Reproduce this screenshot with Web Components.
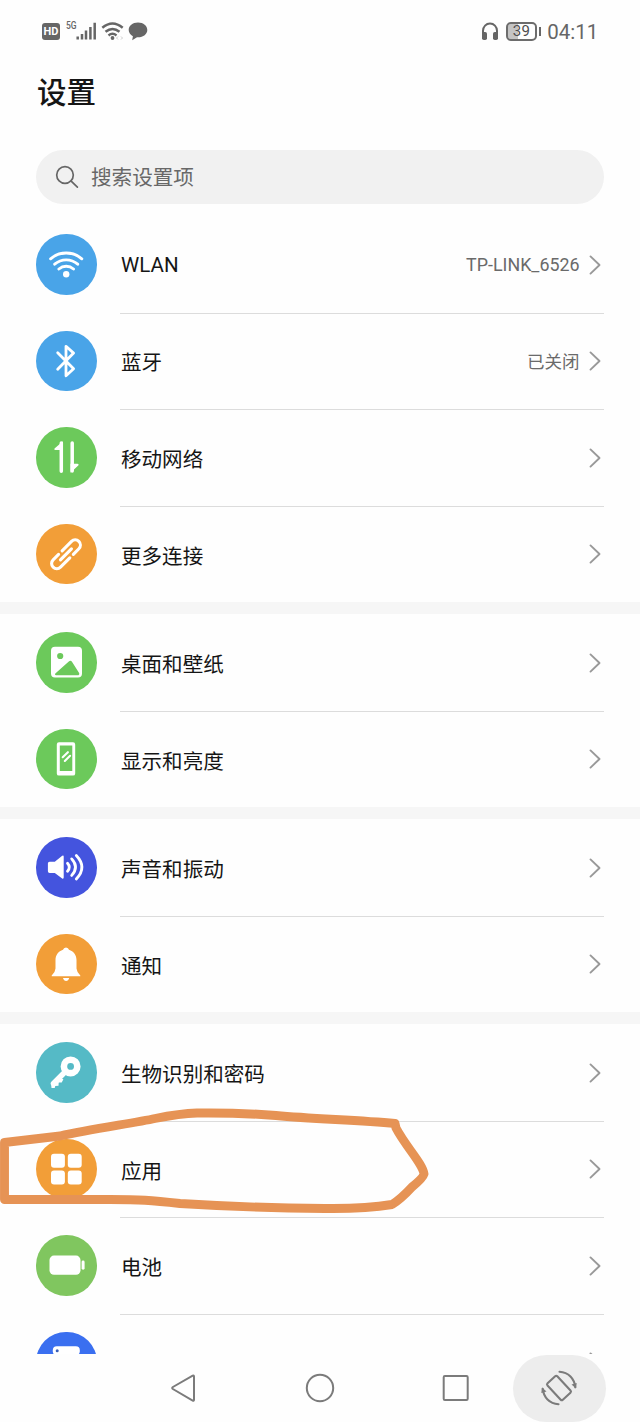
<!DOCTYPE html>
<html lang="zh-CN">
<head>
<meta charset="utf-8">
<title>设置</title>
<style>
html,body{margin:0;padding:0}
body{width:640px;height:1422px;overflow:hidden;background:#fefefe;color:#151515;font-family:Roboto,"Noto Sans CJK SC",sans-serif}
</style>
</head>
<body>
<settings-screen></settings-screen>
<script>
const define = (name, html, setup) => {
  const template = document.createElement('template');
  template.innerHTML = html;
  customElements.define(name, class extends HTMLElement {
    connectedCallback() {
      if (this.shadowRoot) return;
      this.attachShadow({ mode: 'open' }).append(template.content.cloneNode(true));
      if (setup) setup(this, this.shadowRoot);
    }
  });
};

// Glyphs for the round badges, on a 60 x 60 canvas centred on the badge.
const glyphs = {
  wifi: `<g fill="none" stroke="#fff" stroke-width="2.9" stroke-linecap="round"><path d="M14.6 24.8a24 24 0 0 1 31.2 0M18.7 30.2a17.5 17.5 0 0 1 23 0M22.9 35a11.2 11.2 0 0 1 14.6 0"/></g><circle cx="30.2" cy="40.3" r="3.2" fill="#fff"/>`,
  bluetooth: `<path d="M21.7 21.8 37.6 37.7 30 44.8V15.3l7.6 6.8L21.7 38.3" fill="none" stroke="#fff" stroke-width="2.8" stroke-linecap="round" stroke-linejoin="round"/>`,
  data: `<path d="M25.3 16V44.3M36.2 16v28" fill="none" stroke="#fff" stroke-width="3.5" stroke-linecap="round"/><path d="M27 14.3 18.5 21.4q-.8 1.5 1 1.5H27ZM34.5 45.8l8-7.6q.6-1.3-1-1.5H34.5Z" fill="#fff"/>`,
  link: `<g transform="rotate(45 30 30)" fill="none" stroke="#fff" stroke-width="3.100" stroke-linecap="round"><path d="M30.200 22.500V38M25 30.500V17.200a5.200 5.200 0 0 1 10.400 0V25M35.400 30V43.200a5.200 5.200 0 0 1-10.400 0V35.500"/></g>`,
  picture: `<path fill="#fff" fill-rule="evenodd" d="M19 14.8H42a4 4 0 0 1 4 4V41.5a4 4 0 0 1-4 4H19a4 4 0 0 1-4-4V18.8a4 4 0 0 1 4-4ZM20 43.2H42.5q1.7-1 .3-2.7L35.8 29.4q-1.4-1.5-3 0L19.3 41.5q-1 1.6.7 1.7ZM24.2 20.9a3.1 3.1 0 1 0 0 6.2a3.1 3.1 0 0 0 0-6.2Z"/>`,
  phone: `<path fill="#fff" fill-rule="evenodd" d="M23 13.2H37a2.2 2.2 0 0 1 2.2 2.2V44.4a2.2 2.2 0 0 1-2.2 2.2H23a2.2 2.2 0 0 1-2.2-2.2V15.4A2.2 2.2 0 0 1 23 13.2ZM23.8 16.6V42H36.3V16.6Z"/><path d="m26.7 28.2 5.2-5M28.8 32l5.3-5.2" stroke="#fff" stroke-width="2.1" stroke-linecap="round"/>`,
  sound: `<path d="M13.6 24.7h5.2l7.4-6q1.5-.8 1.5.9v21q0 1.7-1.5.9l-7.4-5.6h-5.2q-1.7 0-1.7-1.6V26.3q0-1.6 1.7-1.6Z" fill="#fff"/><g fill="none" stroke="#fff" stroke-linecap="round" stroke-width="2.8"><path d="M31.5 26.2q3.6 4 0 8M35.7 21.9q7.6 8.2 0 16.5M40.3 18.5q11.2 11.8 0 23.5"/></g>`,
  bell: `<path d="M30 13.5q2.4.2 3 2.2c4.5 1.5 7.5 5.3 7.5 10.3v8.5q.2 3.4 3.8 7v.7H15.700v-.7q3.700-3.600 3.800-7V26c0-5 3-8.800 7.500-10.300q.6-2 3-2.200Z" fill="#fff"/><path d="M27 44.100h6.200q-.8 3-3.100 3t-3.100-3Z" fill="#fff"/>`,
  key: `<circle cx="34.600" cy="24.400" r="6.700" fill="none" stroke="#fff" stroke-width="6.600"/><path d="m29.500 29.500-12 12" stroke="#fff" stroke-width="5.500" stroke-linecap="round"/><path d="m23.800 36 3.600 1.300-1.700 3.200-3-.1-.2 3.300-3.200.2-.6 2h-3.200l-.5-5Z" fill="#fff"/>`,
  apps: `<g fill="#fff"><rect x="15" y="14.700" width="13.900" height="14" rx="3"/><rect x="31.800" y="14.700" width="13.900" height="14" rx="3"/><rect x="15" y="31.400" width="13.900" height="14" rx="3"/><rect x="31.800" y="31.400" width="13.900" height="14" rx="3"/></g>`,
  battery: `<rect x="13.500" y="20.600" width="31" height="19.200" rx="4.500" fill="#fff"/><rect x="45.600" y="25.500" width="3" height="9.200" rx="1.400" fill="#fff"/>`,
  storage: `<rect x="16.800" y="14.200" width="27" height="9" rx="4" fill="#fff"/><circle cx="21.200" cy="18.700" r="1.500" fill="#3a5fb8"/>`
};

define('status-bar', `<style>
:host{display:flex;box-sizing:border-box;height:62px;padding:0 42.500px 0 42px;align-items:center;justify-content:space-between;color:#666}
div{display:flex;align-items:center}svg{display:block}
.signals{height:24px}
.net{align-self:flex-start;width:9px;font:500 10px/12px Roboto,sans-serif;margin:1px 0 0 6px;transform:scaleX(.85);transform-origin:left}
.hd{width:18px;height:17px;border-radius:3px;background:#666;color:#fff;font:700 11px/17px Roboto,sans-serif;text-align:center}
.batt{box-sizing:border-box;width:31px;height:19px;border:2px solid #6c6c6c;border-radius:5px;font-size:15px;line-height:15px;justify-content:center;background:linear-gradient(90deg,#c4c4c4 38%,transparent 38%) padding-box;color:#4e4e4e;letter-spacing:.4px;margin-left:7.500px}
.tip{width:2px;height:9px;background:#666;margin:0 6px 0 2px}
.power{margin-right:-.700px}
time{font-size:20.500px;line-height:24px;padding-top:1px}
</style>
<div class="signals"><span class="hd">HD</span><span class="net">5G</span>
<svg width="73" height="24" viewBox="75 19 73 24"><path d="M77.700 39.500v-3M82 39.500v-5.500M86 39.500v-9M90.400 39.500V27M94.700 39.500V22.800" stroke="#666" stroke-width="2.500"/><g fill="none" stroke="#666" stroke-width="2.500"><path d="M102.300 27.700q10.200-8.400 20.400 0M105.500 31.800q7-5.700 14 0M108.500 35.400q4-3.200 8 0"/></g><circle cx="112.500" cy="38" r="1.900" fill="#666"/><path d="m118 36.500-1.500 1.500 1.500 1.500m3-3 1.500 1.500-1.500 1.500" fill="none" stroke="#ccc"/><path d="M138 22.500c5.500 0 9.300 3.400 9.300 7.400s-3.800 7.400-9.300 7.400h-1l-4.800 2.900.7-4c-2.600-1.500-4.200-3.700-4.200-6.300 0-4 3.800-7.400 9.300-7.400Z" fill="#666"/></svg></div>
<div class="power"><svg width="18" height="20" viewBox="0 0 18 20"><path d="M2 13.500V9.800a7 7.300 0 0 1 14 0v3.700" fill="none" stroke="#666" stroke-width="2"/><rect x="1" y="11" width="5" height="8" rx="1.800" fill="#666"/><rect x="12" y="11" width="5" height="8" rx="1.800" fill="#666"/></svg><div class="batt">39</div><span class="tip"></span><time>04:11</time></div>`);

define('search-field', `<style>
:host{display:flex;align-items:center;box-sizing:border-box;height:54px;margin:0 36px;padding-left:19px;border-radius:27px;background:#f1f1f1;color:#686868;font-size:20.600px;line-height:30px}
svg{margin-right:11px}span{padding-top:2px}
</style><svg width="25" height="25" viewBox="0 0 25 25"><g fill="none" stroke="#666" stroke-width="1.700" stroke-linecap="round"><circle cx="10" cy="10" r="8.300"/><path d="m16.200 16.200 6.200 6"/></g></svg><span><slot></slot></span>`);

define('icon-badge', `<style>
:host{display:block;width:60.500px;height:60.500px;border-radius:50%;flex:none}svg{display:block}
</style><svg width="60.500" height="60.500" viewBox="0 0 60.500 60.500"></svg>`, (el, root) => {
  el.style.background = el.getAttribute('tone');
  root.querySelector('svg').innerHTML = glyphs[el.getAttribute('glyph')];
});

define('settings-row', `<style>
:host{display:flex;height:96.550px;align-items:center;padding-left:36px}
.body{display:flex;align-items:center;align-self:stretch;flex:1;margin:0 36px 0 23.500px;border-top:1.200px solid transparent;box-sizing:border-box;padding-left:1px}
:host(:not(:first-child)) .body{border-color:#dcdcdc}
.label{flex:1;font-size:20.550px;line-height:30px;padding-top:4px}
:host([latin]) .label{padding-top:1px}
:host([glyph="storage"]) .label{padding-top:5.500px}
.value{font-size:17.500px;line-height:26px;color:#6a6a6a;margin-right:9.500px;padding-top:1px}
:host([latin]) .value{font-size:17.850px}
svg{display:block;margin:0 3px .300px 0}
</style><icon-badge></icon-badge><div class="body"><span class="label"><slot></slot></span><span class="value"><slot name="value"></slot></span><svg width="12" height="20" viewBox="0 0 12 20"><path d="m1.500 1.400 9 8.600-9 8.600" fill="none" stroke="#999" stroke-width="1.900" stroke-linecap="round" stroke-linejoin="round"/></svg></div>`, (el, root) => {
  const old = root.querySelector('icon-badge');
  const badge = document.createElement('icon-badge');
  badge.setAttribute('glyph', el.getAttribute('glyph'));
  badge.setAttribute('tone', el.getAttribute('tone'));
  old.replaceWith(badge);
});

define('settings-group', `<style>
:host{display:block}
:host(:not(:first-child)){border-top:12px solid #f6f6f6;margin-top:-.100px}
</style><slot></slot>`);

define('nav-bar', `<style>
:host{display:block;height:67.500px;overflow:hidden;background:#fefefe}
div{display:grid;grid-template-columns:116px 136px 136px 125px 92px;height:67.500px;align-items:center;justify-items:center}
.rotate{width:93px;height:67px;border-radius:34px;background:#ededed;display:flex;align-items:center;justify-content:center}
svg{display:block}
</style><div><span></span><svg width="32" height="32" viewBox="-1.500 0 32 32"><path d="M3.400 15 23.200 3.600q1.300-.6 1.300.8v23.400q0 1.400-1.300.8L3.400 17q-1.400-1 0-2Z" fill="none" stroke="#7b7b7b" stroke-width="2"/></svg>
<svg width="32" height="32" viewBox="0 0 32 32"><circle cx="16" cy="16" r="13.200" fill="none" stroke="#7b7b7b" stroke-width="2"/></svg>
<svg width="42" height="32" viewBox="0 0 42 32"><rect x="13.700" y="4" width="24" height="24" rx="1.200" fill="none" stroke="#7b7b7b" stroke-width="2"/></svg>
<span class="rotate"><svg width="40" height="40" viewBox="0 0 40 40"><g fill="none" stroke="#7b7b7b" stroke-width="2.100" stroke-linecap="round" stroke-linejoin="round"><rect x="13.300" y="8.800" width="13.400" height="22.400" rx="1.500" transform="rotate(-43 20 20)"/><path d="M20.500 3.800c9 .4 15 7 15.800 15.500M19.500 36.200C10.500 35.800 4.500 29.200 3.700 20.700"/></g><path d="m32.500 16.500 4.500 4 .7-5.500ZM7.500 23.500l-4.500-4-.7 5.500Z" fill="#7b7b7b"/></svg></span></div>`);

define('marker-outline', `<style>
:host{position:absolute;left:0;top:1100px;width:440px;height:120px;pointer-events:none}svg{display:block}
</style><svg width="440" height="120" viewBox="0 1100 440 120"><path d="M4.500 1142.500Q30 1139.500 60 1136C90 1129 135 1123 155 1118.500Q180 1113.500 197 1113Q238 1112.500 276 1115.500C315 1119 356 1120 395 1123.500L396 1128C406 1147 423 1164 424 1174Q423 1178 412 1187Q401 1199 392 1204.500Q365 1209 325 1208.500C270 1208 220 1206 180 1203.500C150 1200 140 1199.500 110 1199.500H4.500Z" fill="none" stroke="#e69355" stroke-width="8.900" stroke-linejoin="round"/></svg>`);

define('settings-screen', `<style>
:host{display:flex;flex-direction:column;position:relative;width:640px;height:1422px;overflow:hidden;background:#fefefe}
h1{box-sizing:border-box;margin:0 0 0 37px;padding-top:1px;font-size:29.500px;line-height:60px;height:88px;font-weight:500}
main{height:1138.400px;overflow:hidden;margin-top:12.100px;flex:none}
</style><status-bar></status-bar><h1>设置</h1><search-field>搜索设置项</search-field>
<main>
<settings-group>
<settings-row latin glyph="wifi" tone="#49a4e8">WLAN<span slot="value">TP-LINK_6526</span></settings-row>
<settings-row glyph="bluetooth" tone="#49a4e8">蓝牙<span slot="value">已关闭</span></settings-row>
<settings-row glyph="data" tone="#6cc95b">移动网络</settings-row>
<settings-row glyph="link" tone="#f29e38">更多连接</settings-row>
</settings-group>
<settings-group>
<settings-row glyph="picture" tone="#6cc95b">桌面和壁纸</settings-row>
<settings-row glyph="phone" tone="#6cc95b">显示和亮度</settings-row>
</settings-group>
<settings-group>
<settings-row glyph="sound" tone="#4454de">声音和振动</settings-row>
<settings-row glyph="bell" tone="#f29e38">通知</settings-row>
</settings-group>
<settings-group>
<settings-row glyph="key" tone="#55bac6">生物识别和密码</settings-row>
<settings-row glyph="apps" tone="#f29e38">应用</settings-row>
<settings-row glyph="battery" tone="#80c65f">电池</settings-row>
<settings-row glyph="storage" tone="#3a6ff0">存储</settings-row>
</settings-group>
</main><nav-bar></nav-bar><marker-outline></marker-outline>`);
</script>
</body>
</html>
